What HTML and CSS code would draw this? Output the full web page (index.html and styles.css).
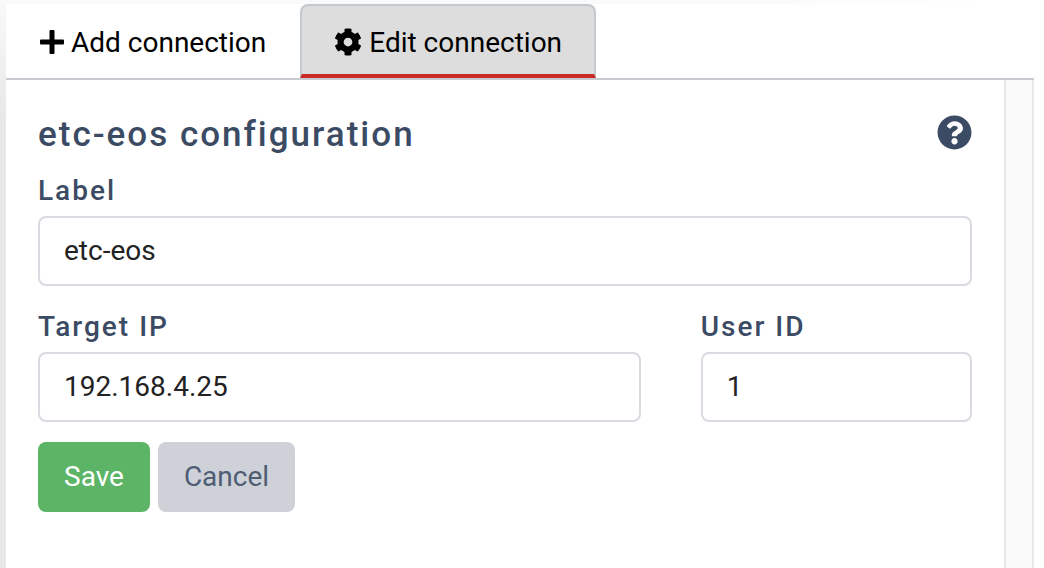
FILE: index.html
```html
<!DOCTYPE html>
<html lang="en">
<head>
<meta charset="utf-8">
<meta name="viewport" content="width=device-width, initial-scale=1">
<title>Edit connection</title>
<link rel="stylesheet" href="styles.css">
</head>
<body>
<main class="panel">
  <nav class="tabs">
    <a class="tab" href="#add">
      <svg class="tab-icon" viewBox="0 0 24 24" aria-hidden="true"><path d="M10.500 0h3a1 1 0 0 1 1 1v8.500H23a1 1 0 0 1 1 1v3a1 1 0 0 1-1 1h-8.500V23a1 1 0 0 1-1 1h-3a1 1 0 0 1-1-1v-8.500H1a1 1 0 0 1-1-1v-3a1 1 0 0 1 1-1h8.500V1a1 1 0 0 1 1-1z"/></svg>
      <span>Add connection</span>
    </a>
    <a class="tab tab-active" href="#edit" aria-current="page">
      <svg class="tab-icon tab-icon-gear" viewBox="0 0 512 512" aria-hidden="true"><path d="M487.400 315.700l-42.600-24.600c4.300-23.200 4.300-47 0-70.200l42.600-24.600c4.900-2.800 7.100-8.600 5.500-14-11.100-35.600-30-67.800-54.700-94.600-3.800-4.100-10-5.100-14.800-2.300L380.800 110c-17.900-15.400-38.500-27.300-60.800-35.100V25.800c0-5.600-3.900-10.500-9.400-11.700-36.700-8.200-74.300-7.800-109.200 0-5.500 1.200-9.400 6.100-9.400 11.700V75c-22.200 7.900-42.800 19.800-60.800 35.100L88.700 85.500c-4.900-2.800-11-1.900-14.800 2.300-24.700 26.700-43.600 58.900-54.700 94.600-1.700 5.400.6 11.200 5.500 14L67.300 221c-4.300 23.200-4.300 47 0 70.200l-42.600 24.600c-4.900 2.800-7.100 8.600-5.500 14 11.100 35.600 30 67.800 54.700 94.600 3.800 4.100 10 5.100 14.800 2.300l42.600-24.600c17.900 15.400 38.500 27.300 60.800 35.100v49.200c0 5.600 3.900 10.500 9.400 11.700 36.700 8.200 74.300 7.800 109.200 0 5.500-1.200 9.400-6.100 9.400-11.700v-49.200c22.200-7.900 42.800-19.800 60.800-35.100l42.600 24.600c4.900 2.800 11 1.900 14.800-2.300 24.700-26.700 43.600-58.900 54.700-94.600 1.500-5.500-.7-11.300-5.600-14.100zM256 336c-44.100 0-80-35.900-80-80s35.900-80 80-80 80 35.900 80 80-35.900 80-80 80z"/></svg>
      <span>Edit connection</span>
    </a>
  </nav>
  <div class="content">
    <form class="form">
      <header class="form-header">
        <h1 class="title">etc-eos configuration</h1>
        <button class="help" type="button" aria-label="Help">
          <svg class="help-icon" viewBox="0 0 512 512" aria-hidden="true"><path d="M504 256c0 137-111 248-248 248S8 393 8 256C8 119.100 119 8 256 8s248 111.100 248 248zM262.700 90c-54.500 0-89.300 23-116.500 63.800-3.500 5.300-2.400 12.400 2.700 16.300l34.700 26.300c5.200 3.900 12.600 3 16.700-2.100 17.900-22.700 30.100-35.800 57.300-35.800 20.400 0 45.700 13.100 45.700 33 0 15-12.400 22.700-32.500 34C247.100 238.500 216 254.900 216 296v4c0 6.600 5.400 12 12 12h56c6.600 0 12-5.400 12-12v-1.300c0-28.500 83.200-29.600 83.200-106.700 0-58-60.200-102-116.500-102zM256 338c-25.400 0-46 20.600-46 46s20.600 46 46 46 46-20.600 46-46-20.600-46-46-46z"/></svg>
        </button>
      </header>
      <div class="fields">
        <div class="field field-full">
          <label class="label" for="name">Label</label>
          <input class="input" id="name" type="text" value="etc-eos">
        </div>
        <div class="field field-wide">
          <label class="label" for="ip">Target IP</label>
          <input class="input" id="ip" type="text" value="192.168.4.25">
        </div>
        <div class="field">
          <label class="label" for="user">User ID</label>
          <input class="input" id="user" type="text" value="1">
        </div>
      </div>
      <div class="actions">
        <button class="button button-save" type="submit">Save</button>
        <button class="button button-cancel" type="button">Cancel</button>
      </div>
    </form>
    <div class="gutter"></div>
  </div>
</main>
</body>
</html>
```
FILE: styles.css
```css
* {
  box-sizing: border-box;
}

body {
  margin: 0;
  min-height: 100vh;
  display: flex;
  padding: 4px 10px 0 6px;
  font-family: Roboto, "Liberation Sans", sans-serif;
  font-size: 28px;
  color: #212529;
  background:
    linear-gradient(to right, #fafafa, #fafafa 70%, #fff 95%) top / 100% 4px no-repeat,
    linear-gradient(#fafafa, #e7e7e7 120px) left / 6px 100% no-repeat,
    #fff;
}

.panel {
  flex: 1;
  display: flex;
  flex-direction: column;
  background: #fff;
}

.tabs {
  display: flex;
  border-bottom: 2px solid #c8ccd1;
}

.tab {
  display: flex;
  align-items: center;
  gap: 7px;
  height: 74px;
  padding: 0 32px;
  border: 2px solid transparent;
  border-bottom: 0;
  border-radius: 8px 8px 0 0;
  color: #000;
  text-decoration: none;
}

.tab-active {
  padding-top: 4px;
  border-color: #c4c9d0;
  border-bottom: 4px solid #c92a25;
  background: #ddd;
}

.tab-icon {
  width: 24px;
  height: 24px;
}

.tab-icon-gear {
  width: 28px;
  height: 28px;
}

.content {
  flex: 1;
  display: flex;
}

.form {
  flex: 1;
  padding: 28px 32px;
}

.gutter {
  width: 30px;
  border: 2px solid #e8e8e8;
  border-width: 0 2px;
  background: #f9f9f9;
}

.form-header {
  display: flex;
  align-items: center;
  justify-content: space-between;
  height: 48px;
  margin-bottom: 14px;
}

.title,
.label {
  font-weight: 500;
  letter-spacing: 2px;
  color: #3c4b64;
}

.title {
  margin: 0;
  padding-top: 4px;
  font-size: 35px;
}

.help {
  display: flex;
  padding: 0;
  border: 0;
  background: none;
  color: #3c4b64;
}

.help-icon {
  width: 35px;
  height: 35px;
}

.tab-icon,
.help-icon {
  fill: currentColor;
}

.fields {
  display: grid;
  grid-template-columns: repeat(3, 1fr);
  gap: 20px 60px;
}

.field {
  display: flex;
  flex-direction: column;
  gap: 4px;
  min-width: 0;
}

.field-full {
  grid-column: span 3;
}

.field-wide {
  grid-column: span 2;
}

.label {
  line-height: 42px;
}

.input {
  width: 100%;
  height: 70px;
  padding: 0 24px 2px;
  border: 2px solid #d8dbe0;
  border-radius: 8px;
  font: inherit;
  color: #222;
  background: #fff;
}

.actions {
  display: flex;
  gap: 8px;
  margin-top: 20px;
}

.button {
  height: 70px;
  padding: 0 26px 2px;
  border: 0;
  border-radius: 8px;
  font: inherit;
}

.button-save {
  color: #fff;
  background: #5cb567;
}

.button-cancel {
  color: #4f5d73;
  background: #ced2d8;
}
```
